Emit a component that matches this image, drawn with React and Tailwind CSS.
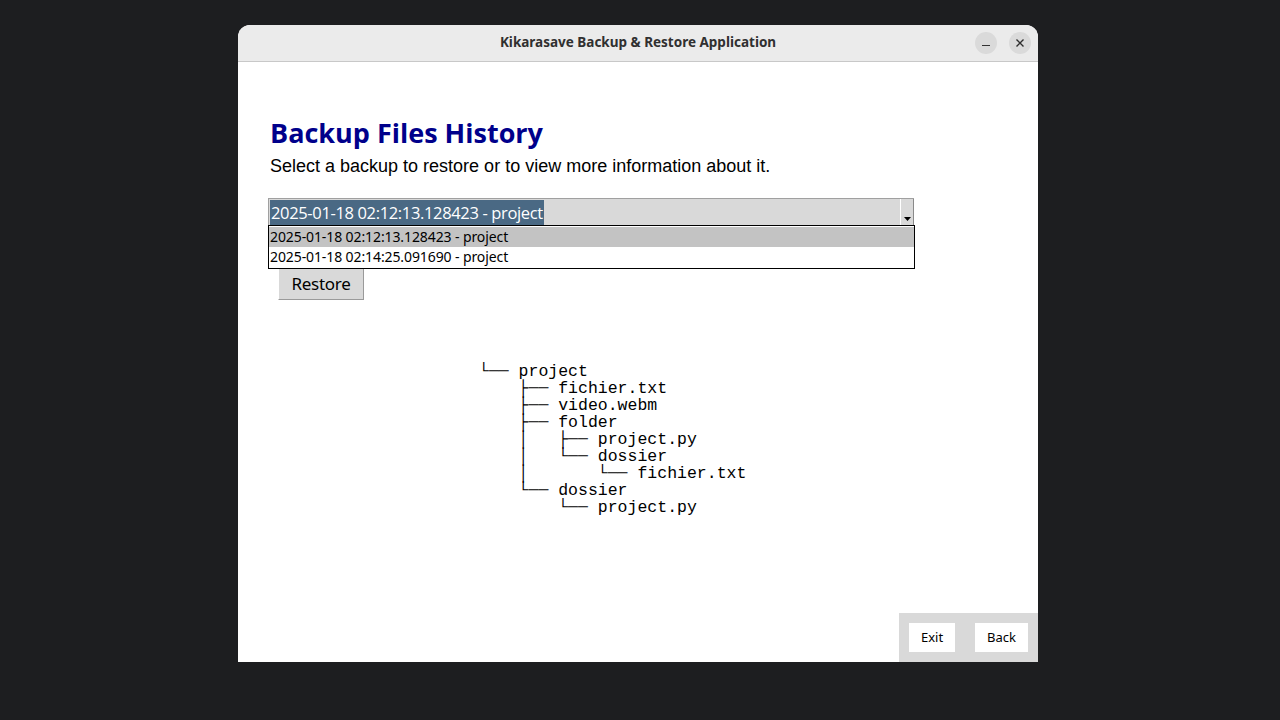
import React from "react";

const tree = [
  "└── project",
  "    ├── fichier.txt",
  "    ├── video.webm",
  "    ├── folder",
  "    │   ├── project.py",
  "    │   └── dossier",
  "    │       └── fichier.txt",
  "    └── dossier",
  "        └── project.py",
];

const backups = [
  "2025-01-18 02:12:13.128423 - project",
  "2025-01-18 02:14:25.091690 - project",
];

export default function App() {
  return (
    <div className="w-full h-[720px] bg-[#1d1e20] pt-[25px] pl-[238px] overflow-hidden">
      <div className="w-[800px] h-[637px] bg-white rounded-t-[12px] overflow-hidden flex flex-col">
        {/* title bar */}
        <div className="h-[37px] shrink-0 bg-[#ebebeb] border-b border-[#c8c8c8] flex items-center relative">
          <div className="flex-1 text-center text-[13.5px] font-bold text-[#303030] font-['Noto_Sans',sans-serif] mt-[-1px]">
            Kikarasave Backup &amp; Restore Application
          </div>
          <div className="absolute right-[7px] top-[7px] flex gap-[12px]">
            <div className="w-[22px] h-[22px] rounded-full bg-[#dadada] flex items-center justify-center">
              <div className="w-[8px] h-[1px] bg-[#333] mt-[5px]" />
            </div>
            <div className="w-[22px] h-[22px] rounded-full bg-[#dadada] flex items-center justify-center">
              <svg width="10" height="10" viewBox="0 0 10 10">
                <path d="M1.5 1.5 L8.5 8.5 M8.5 1.5 L1.5 8.5" stroke="#2e2e2e" strokeWidth="1.4" />
              </svg>
            </div>
          </div>
        </div>

        {/* body */}
        <div className="flex-1 flex flex-col relative">
          <div className="pl-[32px] pt-[54px]">
            <h1 className="text-[27px] leading-[34px] font-bold text-[#00008b] font-['Open_Sans',sans-serif]">
              Backup Files History
            </h1>
            <p className="mt-[4px] text-[18px] leading-[24px] text-black font-['Liberation_Sans',sans-serif]">
              Select a backup to restore or to view more information about it.
            </p>
          </div>

          {/* combobox */}
          <div className="ml-[30px] mt-[20px] w-[646px] relative">
            <div className="h-[27px] bg-[#d9d9d9] border-t border-l border-[#a0a0a0] flex items-center">
              <span className="ml-[1px] bg-[#4a6984] text-white text-[16.5px] leading-[25px] px-[1px] font-['Open_Sans',sans-serif] tracking-[-0.35px]">
                {backups[0]}
              </span>
              <div className="ml-auto w-[14px] h-[26px] bg-[#d9d9d9] border-l border-white border-r border-r-[#8a8a8a] flex items-end justify-center pb-[4px]">
                <svg width="7" height="4" viewBox="0 0 7 4">
                  <path d="M0 0 H7 L3.5 4 Z" fill="#000" />
                </svg>
              </div>
            </div>
            {/* dropdown list overlay */}
            <div className="absolute left-0 top-[27px] w-[647px] bg-white border border-black z-10 font-['Noto_Sans',sans-serif] text-[14px] tracking-[-0.1px] text-black pt-[1px] pb-[1px]">
              <div className="h-[20px] leading-[20px] bg-[#c3c3c3] pl-[1px]">{backups[0]}</div>
              <div className="h-[20px] leading-[20px] pl-[1px]">{backups[1]}</div>
            </div>
          </div>

          <div className="ml-[40px] mt-[43px]">
            <button className="w-[86px] h-[32px] bg-[#d9d9d9] border border-t-white border-l-white border-r-[#9a9a9a] border-b-[#9a9a9a] text-[17px] text-black font-['Noto_Sans',sans-serif] tracking-[-0.3px]">
              Restore
            </button>
          </div>

          {/* tree */}
          <div className="ml-[241px] mt-[63px]">
            <pre className="font-['Liberation_Mono',monospace] text-[16.5px] leading-[17px] text-black">
              {tree.join("\n")}
            </pre>
          </div>

          {/* footer buttons */}
          <div className="mt-auto self-end w-[139px] h-[49px] bg-[#d9d9d9] flex items-center gap-[20px] pl-[10px]">
            <button className="w-[46px] h-[29px] bg-white text-[13px] text-black font-['Noto_Sans',sans-serif]">
              Exit
            </button>
            <button className="w-[53px] h-[29px] bg-white text-[13px] text-black font-['Noto_Sans',sans-serif]">
              Back
            </button>
          </div>
        </div>
      </div>
    </div>
  );
}
